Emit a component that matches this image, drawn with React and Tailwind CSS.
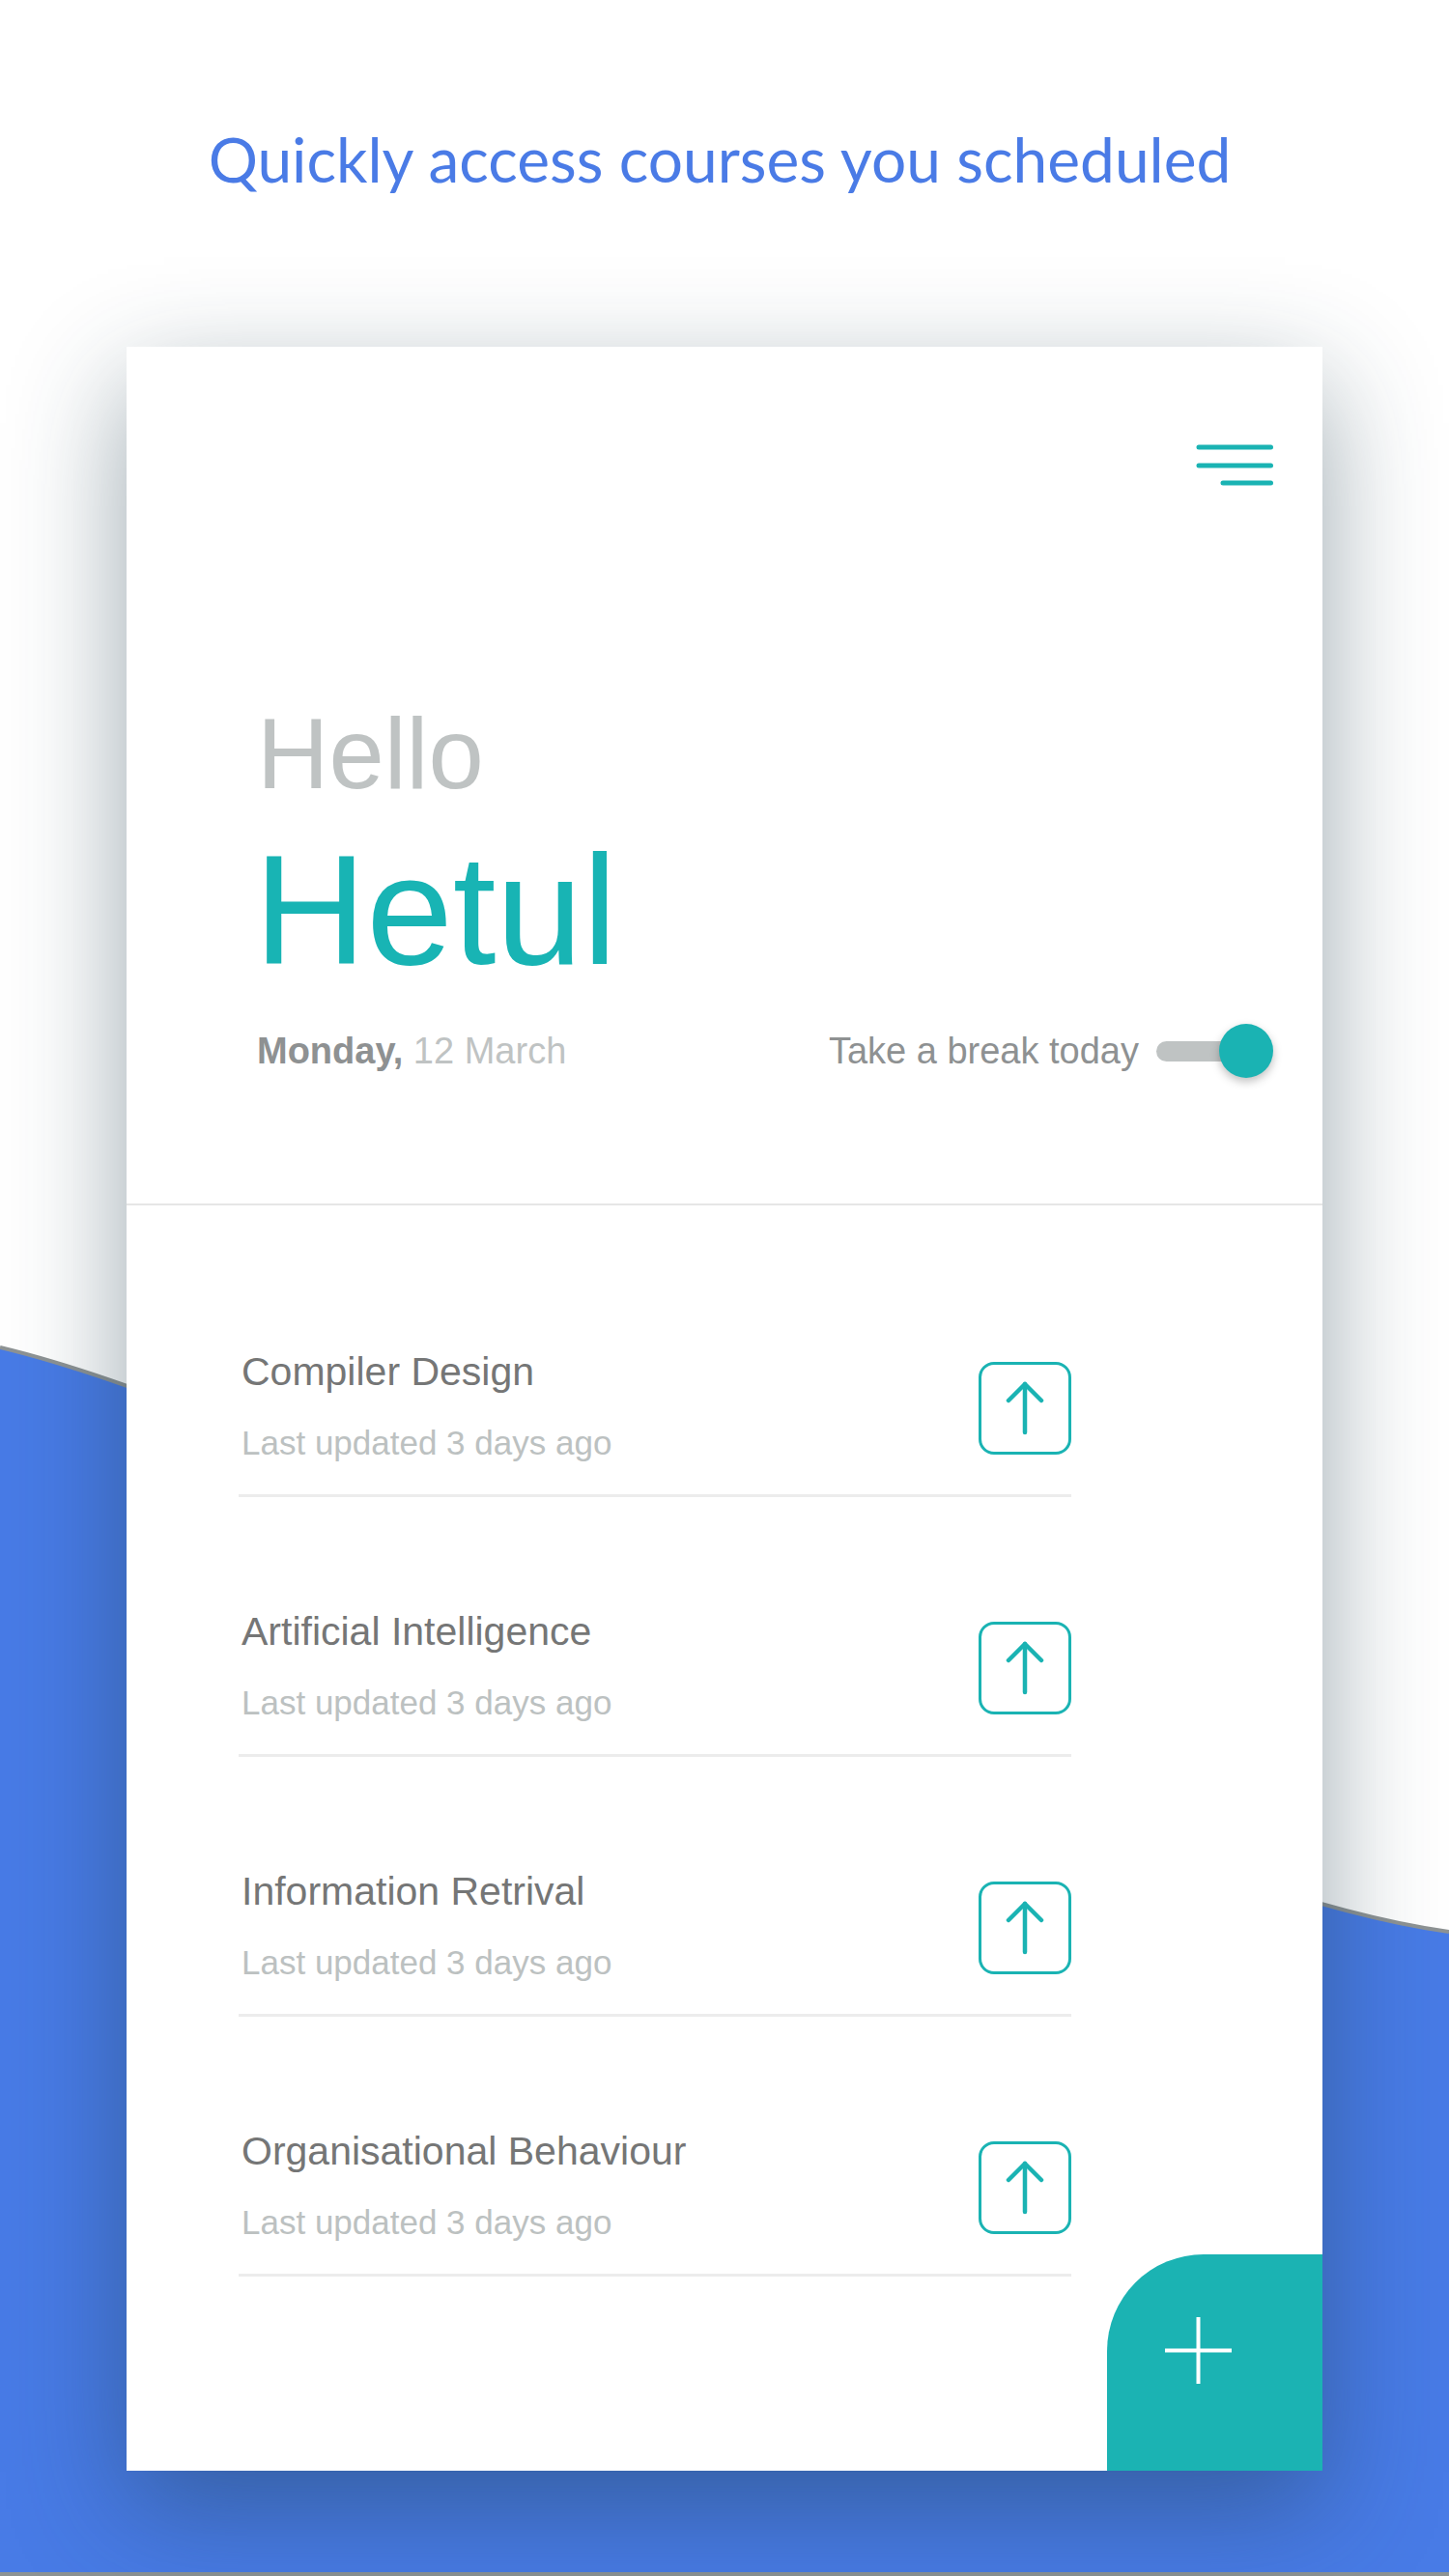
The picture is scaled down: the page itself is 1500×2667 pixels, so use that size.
export default function App() {
  const courses = [
    "Compiler Design",
    "Artificial Intelligence",
    "Information Retrival",
    "Organisational Behaviour",
  ];

  return (
    <div className="relative w-[1500px] h-[2667px] overflow-hidden bg-white">
      {/* blue wave behind everything */}
      <svg className="absolute left-0 top-0" width="1500" height="2667" viewBox="0 0 1500 2667">
        <path d="M0 1395 C400 1491 1100 1945 1500 2000 L1500 2667 L0 2667 Z" fill="#487be6" />
        <path d="M0 1395 C400 1491 1100 1945 1500 2000" fill="none" stroke="#8e9394" strokeWidth="4" />
      </svg>
      <div className="absolute left-0 bottom-0 h-[4px] w-full bg-[#8d9394]" />

      <div className="relative">
        {/* Heading */}
        <h1 className="pt-[127px] pr-[10px] text-center text-[64px] leading-[75px] text-[#4a7be6] font-['Lato','Noto_Sans',sans-serif]">
          Quickly access courses you scheduled
        </h1>

        {/* Card */}
        <div className="relative mt-[157px] ml-[131px] w-[1238px] h-[2199px] bg-white shadow-[0_40px_110px_rgba(30,60,75,0.45)] font-['Liberation_Sans',Arial,sans-serif]">
          {/* Header */}
          <div className="h-[887px] pt-[100px] pl-[135px] pr-[51px]">
            <div className="flex justify-end">
              <svg width="80" height="46" viewBox="0 0 80 46">
                <g stroke="#1ab3b3" strokeWidth="5" strokeLinecap="round">
                  <line x1="3" y1="4" x2="77.5" y2="4" />
                  <line x1="3" y1="23" x2="77.5" y2="23" />
                  <line x1="28" y1="41" x2="77.5" y2="41" />
                </g>
              </svg>
            </div>

            <div className="mt-[224px] text-[103px] leading-none text-[#bfc3c3]">Hello</div>
            <div className="mt-[30px] -ml-[3px] text-[161px] leading-none text-[#18b4b4]">Hetul</div>

            <div className="mt-[37px] flex items-center justify-between h-[56px]">
              <div className="text-[38px] leading-none">
                <span className="font-bold text-[#8e9192]">Monday,</span>{" "}
                <span className="text-[#bfc3c3]">12 March</span>
              </div>
              <div className="flex items-center gap-[18px]">
                <span className="text-[38px] leading-none text-[#8e9192]">Take a break today</span>
                <div className="relative w-[121px] h-[56px]">
                  <div className="absolute left-0 top-[18px] h-[21px] w-[100px] rounded-full bg-[#bfc3c3]" />
                  <div className="absolute right-0 top-0 h-[56px] w-[56px] rounded-full bg-[#1ab3b3] shadow-[0_4px_10px_rgba(0,0,0,0.25)]" />
                </div>
              </div>
            </div>
          </div>

          <div className="h-[2px] bg-[#e6e6e6]" />

          {/* Course list */}
          <div className="pt-[152px] pl-[116px] pr-[260px]">
            {courses.map((name, i) => (
              <div key={name} className={i > 0 ? "mt-[119px]" : ""}>
                <div className="flex items-start justify-between h-[147px]">
                  <div className="pl-[3px]">
                    <div className="text-[41px] leading-none text-[#757676]">{name}</div>
                    <div className="mt-[35px] text-[35px] leading-none text-[#bcc1c1]">Last updated 3 days ago</div>
                  </div>
                  <div className="mt-[10px] w-[96px] h-[96px] rounded-[16px] border-[3px] border-[#1ab3b3] flex items-center justify-center">
                    <svg width="40" height="56" viewBox="0 0 40 56">
                      <g stroke="#1ab3b3" strokeWidth="4.5" strokeLinecap="round" strokeLinejoin="round" fill="none">
                        <path d="M20 3 L20 53" />
                        <path d="M3 20 L20 3 L37 20" />
                      </g>
                    </svg>
                  </div>
                </div>
                <div className="h-[3px] bg-[#ececec]" />
              </div>
            ))}
          </div>

          {/* Floating add button */}
          <div className="absolute right-0 bottom-0 w-[223px] h-[224px] rounded-tl-[100px] bg-[#1bb3b3]">
            <svg className="absolute left-[60px] top-[65px]" width="69" height="69" viewBox="0 0 69 69">
              <g stroke="#ffffff" strokeWidth="4">
                <line x1="34.5" y1="0" x2="34.5" y2="69" />
                <line x1="0" y1="34.5" x2="69" y2="34.5" />
              </g>
            </svg>
          </div>
        </div>
      </div>
    </div>
  );
}
